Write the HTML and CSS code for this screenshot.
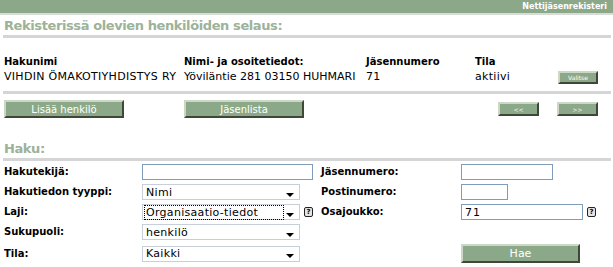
FILE: index.html
```html
<!DOCTYPE html>
<html lang="fi">
<head>
<meta charset="utf-8">
<title>Nettijäsenrekisteri</title>
<link rel="stylesheet" href="styles.css">
</head>
<body>
<div class="topbar"><span class="topbar-text">Nettijäsenrekisteri</span></div>
<h1 class="section-title">Rekisterissä olevien henkilöiden selaus:</h1>

<div class="results">
  <div class="rhead">Hakunimi</div>
  <div class="rhead">Nimi- ja osoitetiedot:</div>
  <div class="rhead">Jäsennumero</div>
  <div class="rhead">Tila</div>
  <div></div>
  <div class="rcell">VIHDIN ÖMAKOTIYHDISTYS RY</div>
  <div class="rcell tight">Yöviläntie 281 03150 HUHMARI</div>
  <div class="rcell">71</div>
  <div class="rcell">aktiivi</div>
  <div class="rcell"><button class="btn btn-small">Valitse</button></div>
</div>

<div class="actions">
  <button class="btn btn-wide">Lisää henkilö</button>
  <button class="btn btn-wide second">Jäsenlista</button>
  <span class="spacer"></span>
  <button class="btn btn-nav">&lt;&lt;</button>
  <button class="btn btn-nav">&gt;&gt;</button>
</div>

<h2 class="section-title search-title">Haku:</h2>

<form class="search">
  <label class="lbl">Hakutekijä:</label>
  <div class="field wide-field"><input class="text wide" type="text"></div>
  <label class="lbl lbl2">Jäsennumero:</label>
  <div class="field"><input class="text mid" type="text"></div>

  <label class="lbl">Hakutiedon tyyppi:</label>
  <div class="field"><div class="select"><span class="sel-text">Nimi</span><span class="caret"></span></div></div>
  <span></span>
  <label class="lbl lbl2">Postinumero:</label>
  <div class="field"><input class="text small" type="text"></div>

  <label class="lbl">Laji:</label>
  <div class="field"><div class="select"><span class="sel-text focused">Organisaatio-tiedot</span><span class="caret"></span></div></div>
  <span class="help">?</span>
  <label class="lbl lbl2">Osajoukko:</label>
  <div class="field"><input class="text long" type="text" value="71"><span class="help">?</span></div>

  <label class="lbl">Sukupuoli:</label>
  <div class="field"><div class="select"><span class="sel-text">henkilö</span><span class="caret"></span></div></div>
  <span></span>
  <span></span>
  <span></span>

  <label class="lbl">Tila:</label>
  <div class="field"><div class="select"><span class="sel-text">Kaikki</span><span class="caret"></span></div></div>
  <span></span>
  <span></span>
  <div class="field"><button class="btn btn-search" type="button">Hae</button></div>
</form>
</body>
</html>
```
FILE: styles.css
```css
html, body {
  margin: 0;
  padding: 0;
  background: #ffffff;
}
body {
  font-family: "DejaVu Sans", Verdana, sans-serif;
  color: #000;
  width: 613px;
  overflow: hidden;
}
.topbar {
  height: 13px;
  background: #8ba988;
  display: flex;
  justify-content: flex-end;
  align-items: center;
  padding-right: 6px;
  border-bottom: 2px solid #dadada;
}
.topbar-text {
  color: #fff;
  font-weight: bold;
  font-size: 8px;
}
.section-title {
  margin: 3px 2px 0 3px;
  padding: 0 0 2px 1px;
  font-size: 13px;
  letter-spacing: -0.4px;
  font-weight: bold;
  line-height: 15px;
  color: #9cb299;
  border-bottom: 3px solid #d5d5d5;
}
.results {
  display: grid;
  grid-template-columns: 180px 182px 109px 83px auto;
  margin: 18px 2px 0 3px;
  padding: 0 0 7px 1px;
  border-bottom: 3px solid #d5d5d5;
}
.rhead {
  font-weight: bold;
  font-size: 10px;
  line-height: 12px;
  height: 14px;
}
.rcell {
  font-size: 11px;
  line-height: 14px;
  letter-spacing: 0.3px;
  display: flex;
  align-items: center;
}
.rcell.tight {
  letter-spacing: 0;
}
.btn {
  font-family: "DejaVu Sans", Verdana, sans-serif;
  background: #8ba988;
  color: #fff;
  border-style: solid;
  border-width: 2px;
  border-color: #cdd7c6 #3f4838 #3f4838 #cdd7c6;
  padding: 0;
  margin: 0;
  cursor: pointer;
}
.btn-small {
  width: 40px;
  height: 13px;
  font-size: 6px;
  line-height: 9px;
}
.actions {
  display: flex;
  align-items: center;
  margin: 6px 0 0 4px;
}
.btn-wide {
  width: 120px;
  height: 18px;
  font-size: 10px;
}
.btn-wide.second {
  margin-left: 60px;
}
.spacer {
  flex: 1;
}
.btn-nav {
  width: 41px;
  height: 14px;
  font-size: 6px;
  margin-right: 15px;
}
.btn-nav + .btn-nav {
  margin-left: 3px;
}
.search-title {
  margin-top: 23px;
}
.search {
  display: grid;
  grid-template-columns: 138px 158px 20px 141px auto;
  grid-auto-rows: auto;
  row-gap: 4px;
  margin: 3px 0 0 4px;
  align-items: center;
}
.lbl {
  font-weight: bold;
  font-size: 10px;
  line-height: 16px;
}
.lbl2 {
  padding-left: 1px;
}
.field {
  display: flex;
  align-items: center;
  gap: 4px;
}
.text {
  box-sizing: border-box;
  height: 16px;
  border: 1px solid #7f9db9;
  padding: 0 3px;
  font-family: "DejaVu Sans", Verdana, sans-serif;
  font-size: 11px;
  letter-spacing: 1px;
  margin: 0;
}
.wide { width: 171px; }
.wide-field { grid-column: 2 / span 2; }
.mid { width: 92px; }
.small { width: 47px; }
.long { width: 122px; }
.select {
  box-sizing: border-box;
  width: 158px;
  height: 16px;
  border: 1px solid #c7d0da;
  display: flex;
  align-items: center;
  padding: 0 3px 0 2px;
  font-size: 11px;
  letter-spacing: 0.3px;
}
.sel-text {
  flex: 1;
  line-height: 13px;
  padding-left: 1px;
}
.sel-text.focused {
  outline: 1px dotted #000;
  outline-offset: 0;
  flex: 0 0 137px;
}
.caret {
  margin-left: auto;
  width: 0;
  height: 0;
  border-left: 4px solid transparent;
  border-right: 4px solid transparent;
  border-top: 4px solid #000;
  margin-top: 5px;
  margin-right: 2px;
}
.help {
  box-sizing: border-box;
  display: inline-flex;
  align-items: center;
  justify-content: center;
  width: 9px;
  height: 10px;
  border: 1px solid #222;
  border-radius: 2px;
  background: #e4e4e4;
  font-size: 7px;
  font-weight: bold;
  line-height: 8px;
  justify-self: start;
  margin-left: 4px;
}
.field .help {
  margin-left: 0;
}
.btn-search {
  width: 119px;
  height: 19px;
  font-size: 11px;
}
```
